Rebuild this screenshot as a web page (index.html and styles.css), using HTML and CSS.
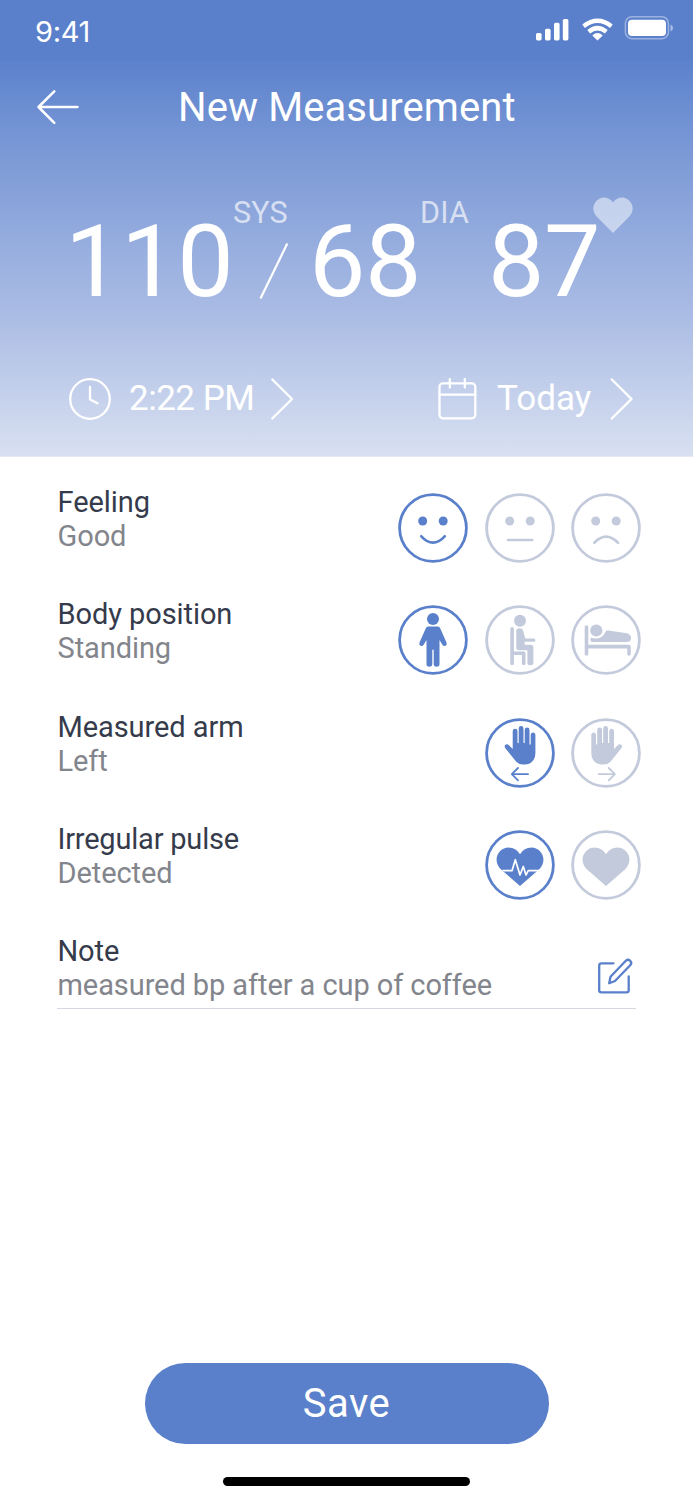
FILE: index.html
```
<!DOCTYPE html>
<html lang="en">
<head>
<meta charset="utf-8">
<title>New Measurement</title>
<link rel="stylesheet" href="styles.css">
</head>
<body>
<main class="screen">
  <div class="status">
    <span class="time">9:41</span>
    <svg class="status-icons" width="140" height="28" viewBox="0 0 140 28" fill="#fff">
      <rect x="2" y="19" width="5.6" height="7.4" rx="1.6"/>
      <rect x="11" y="14.8" width="5.6" height="11.6" rx="1.6"/>
      <rect x="20" y="8.8" width="5.6" height="17.6" rx="1.6"/>
      <rect x="28.8" y="5" width="5.6" height="21.4" rx="1.6"/>
      <g fill="none" stroke="#fff" stroke-width="4.4">
        <path d="M49.600 12.200Q63.500 1.500 77.400 12.200"/>
        <path d="M54.700 17.800Q63.500 10.400 72.300 17.800"/>
      </g>
      <path d="M58.300 21.400Q63.500 16.600 68.700 21.400L63.500 26.400Z"/>
      <rect x="91.400" y="2.700" width="43" height="22" rx="6.500" fill="none" stroke="#fff" stroke-opacity=".4" stroke-width="1.500"/>
      <rect x="94" y="5.700" width="38" height="16.400" rx="4"/>
      <path d="M136.500 10.500Q139 11.500 139 14T136.500 17.500Z" opacity=".5"/>
    </svg>
  </div>
  <header class="hero">
    <div class="titlebar">
      <svg class="back" width="46" height="38" viewBox="0 0 46 38" fill="none" stroke="#fff" stroke-width="2.500" stroke-linecap="round" stroke-linejoin="round"><path d="M42.500 19H3.500M19.300 3.300L3.500 19L19.300 34.800"/></svg>
      <h1 class="title">New Measurement</h1>
    </div>
    <div class="readings">
      <span class="num num-sys">110</span>
      <div class="sep"><span class="unit">SYS</span><svg class="slash" width="30" height="58" viewBox="0 0 30 58" stroke="#fff" stroke-width="2.200"><path d="M1.500 56.500L28.300 1.500"/></svg></div>
      <span class="num num-dia">68</span>
      <span class="unit unit-dia">DIA</span>
      <span class="num num-pulse">87</span>
      <svg class="pulse-heart" width="40" height="37" viewBox="0 0 40 37" fill="#fff" fill-opacity=".5"><path d="M20 36L3.400 19.300C-4 10.500 3.500.500 10.500.500Q16.500.500 20 5.300Q23.500.500 29.500.500C36.500.500 44 10.500 36.600 19.300Z"/></svg>
    </div>
    <div class="when">
      <div class="pick">
        <svg width="44" height="44" viewBox="0 0 44 44" fill="none" stroke="#fff" stroke-width="2.300" stroke-linecap="round" stroke-linejoin="round"><circle cx="22" cy="22" r="19.800"/><path d="M22 10V22.500L29.500 26.300"/></svg>
        <span class="pick-text time-text">2:22 PM</span>
        <svg width="24" height="44" viewBox="0 0 24 44" fill="none" stroke="#fff" stroke-width="2.400" stroke-linecap="round" stroke-linejoin="round"><path d="M2.300 2.500L22 22L2.300 41.500"/></svg>
      </div>
      <div class="pick">
        <svg width="40" height="44" viewBox="0 0 40 44" fill="none" stroke="#fff" stroke-width="2.300" stroke-linecap="round"><rect x="2.500" y="6.300" width="35.800" height="35" rx="3.500"/><path d="M2.500 17.600H38.300M12.800 2.200V10.500M27.800 2.200V10.500"/></svg>
        <span class="pick-text">Today</span>
        <svg width="24" height="44" viewBox="0 0 24 44" fill="none" stroke="#fff" stroke-width="2.400" stroke-linecap="round" stroke-linejoin="round"><path d="M1.800 2.500L21.500 22L1.800 41.500"/></svg>
      </div>
    </div>
  </header>
  <section class="form">
    <div class="row">
      <div class="labels"><div class="label">Feeling</div><div class="value">Good</div></div>
      <div class="options">
        <svg class="opt on" viewBox="0 0 70 70"><circle class="ring" cx="35" cy="35" r="33.400"/><circle cx="24.700" cy="28" r="4.500"/><circle cx="45.200" cy="28" r="4.500"/><path class="line" d="M23.300 43.300Q35 56 46.700 43.300"/></svg>
        <svg class="opt" viewBox="0 0 70 70"><circle class="ring" cx="35" cy="35" r="33.400"/><circle cx="24.700" cy="28" r="4.500"/><circle cx="45.200" cy="28" r="4.500"/><path class="line" d="M23 47H47.200"/></svg>
        <svg class="opt" viewBox="0 0 70 70"><circle class="ring" cx="35" cy="35" r="33.400"/><circle cx="24.700" cy="28" r="4.500"/><circle cx="45.200" cy="28" r="4.500"/><path class="line" d="M23.300 49.700Q35 37.500 47 49.700"/></svg>
      </div>
    </div>
    <div class="row">
      <div class="labels"><div class="label">Body position</div><div class="value">Standing</div></div>
      <div class="options">
        <svg class="opt on" viewBox="0 0 70 70"><circle class="ring" cx="35" cy="35" r="33.400"/><circle cx="35" cy="14" r="6"/><path d="M30 21.500H40Q41.500 21.500 42.300 23.500L48.500 37.500Q49.300 40 47.300 40.800Q45.300 41.300 44.200 39.400L41.500 35V59Q41.500 61.800 38.800 61.800Q35.700 61.800 35.700 59V44.700H34.300V59Q34.300 61.800 31.200 61.800Q28.500 61.800 28.500 59V35L25.800 39.400Q24.700 41.300 22.700 40.800Q20.700 40 21.500 37.500L27.700 23.500Q28.500 21.500 30 21.500Z"/></svg>
        <svg class="opt" viewBox="0 0 70 70"><circle class="ring" cx="35" cy="35" r="33.400"/><circle cx="35" cy="15.800" r="6"/><path d="M31.300 26.500Q31.300 23.300 34.500 23.300Q37.500 23.300 38.200 26L40.200 33.500H48.800Q50.400 33.500 50.400 35.200Q50.400 36.700 48.800 36.700H39.600V39.700H45.500Q48.400 39.700 48.400 42.600V58Q48.400 60.200 45.400 60.200Q42.400 60.200 42.400 58V45.300H34Q31.300 45.300 31.300 42.500Z"/><path class="line thick" d="M27.100 23.700V58.400M27.500 48.300H38.700V58.400"/></svg>
        <svg class="opt" viewBox="0 0 70 70"><circle class="ring" cx="35" cy="35" r="33.400"/><path class="line thick" d="M15.500 22V49M15.500 41.600H58V49"/><circle cx="25.300" cy="25.500" r="6.100"/><path d="M20.500 32.800Q25 34.500 29.500 32.500Q33 30.800 34.500 26.700Q35 25.200 37.500 25.500L56 28.300Q60 29.700 60 33Q60 37 55.500 37H21.300Q19.300 36.800 19.300 34.800Q19.300 33 20.500 32.800Z"/></svg>
      </div>
    </div>
    <div class="row">
      <div class="labels"><div class="label">Measured arm</div><div class="value">Left</div></div>
      <div class="options">
        <svg class="opt on" viewBox="0 0 70 70"><circle class="ring" cx="35" cy="35" r="33.400"/><path d="M27.700 31V13.200A2.400 2.400 0 0 1 32.500 13.200V25H33.700V10.400A2.400 2.400 0 0 1 38.500 10.400V25H39.700V12A2.400 2.400 0 0 1 44.500 12V26.500H45.700V16.500A2.400 2.400 0 0 1 50.400 16.500V35.500Q50 46.600 38 46.600Q32.500 46.600 29 41L20 29.700Q19 27.500 20.800 26.500Q22.500 25.700 24.200 27.500Z"/><path class="line thin" d="M43 56.200H27M33 50L26.800 56.200L33 62.400"/></svg>
        <svg class="opt" viewBox="0 0 70 70"><circle class="ring" cx="35" cy="35" r="33.400"/><g transform="translate(70.700 0) scale(-1 1)"><path d="M27.700 31V13.200A2.400 2.400 0 0 1 32.500 13.200V25H33.700V10.400A2.400 2.400 0 0 1 38.500 10.400V25H39.700V12A2.400 2.400 0 0 1 44.500 12V26.500H45.700V16.500A2.400 2.400 0 0 1 50.400 16.500V35.500Q50 46.600 38 46.600Q32.500 46.600 29 41L20 29.700Q19 27.500 20.800 26.500Q22.500 25.700 24.200 27.500Z"/><path class="line thin" d="M43 56.200H27M33 50L26.800 56.200L33 62.400"/></g></svg>
      </div>
    </div>
    <div class="row">
      <div class="labels"><div class="label label-tight">Irregular pulse</div><div class="value">Detected</div></div>
      <div class="options">
        <svg class="opt on" viewBox="0 0 70 70"><circle class="ring" cx="35" cy="35" r="33.400"/><path d="M35 56L15.500 39C6.500 29 14.500 17.600 23.500 17.600Q31 17.600 35 24.300Q39 17.600 46.500 17.600C55.500 17.600 63.500 29 54.500 39Z"/><path class="beat" d="M17.300 40.700H27L30.300 29.700L35 45L38.300 36.500L41 45L43.300 40.700H54.700"/></svg>
        <svg class="opt" viewBox="0 0 70 70"><circle class="ring" cx="35" cy="35" r="33.400"/><path d="M35 56L15.500 39C6.500 29 14.500 17.600 23.500 17.600Q31 17.600 35 24.300Q39 17.600 46.500 17.600C55.500 17.600 63.500 29 54.500 39Z"/></svg>
      </div>
    </div>
    <div class="note">
      <div class="labels"><div class="label">Note</div><div class="value">measured bp after a cup of coffee</div></div>
      <svg class="edit" width="40" height="40" viewBox="0 0 40 40" fill="none" stroke="#5a80cb" stroke-width="2.300" stroke-linecap="round" stroke-linejoin="round"><path d="M18.500 8.300H6.500Q4.200 8.300 4.200 10.500V35.200Q4.200 37.300 6.500 37.300H31.500Q33.700 37.300 33.700 35.200V21.500"/><path d="M14.200 28.300L15.500 21.700L30.800 5.800Q33 3.800 35.200 5.800Q37.400 8 35.200 10.300L20 26Z"/></svg>
    </div>
  </section>
  <footer class="footer">
    <button class="save">Save</button>
    <div class="home"></div>
  </footer>
</main>
</body>
</html>
```
FILE: styles.css
```
* { box-sizing: border-box; }
body { margin: 0; background: #fff; font-family: Roboto, sans-serif; }
.screen { width: 693px; height: 1500px; display: flex; flex-direction: column; overflow: hidden; }
.status { height: 61px; background: #5a80cb; display: flex; justify-content: space-between; padding: 14px 19px 0 35px; }
.time { font: 400 29px/35px Inter, sans-serif; color: #fff; letter-spacing: -0.3px; }
.status-icons { display: block; }
.hero { height: 396px; background: linear-gradient(#5c82cd 0%, #7b99d6 23%, #a9bbe4 63%, #d8e0f1 100%); color: #fff; border-bottom: 1px solid #e6eaf4; }
.titlebar { height: 92px; display: flex; align-items: center; padding-left: 35px; }
.back { display: block; }
.title { margin: 2px 0 0 97px; font-size: 40px; line-height: 48px; font-weight: 400; letter-spacing: 0.1px; white-space: nowrap; }
.readings { height: 161px; display: flex; align-items: flex-start; padding: 43px 0 0 65px; }
.num { font-size: 100.5px; line-height: 120px; letter-spacing: -0.4px; white-space: nowrap; margin-top: 6px; }
.num-sys { width: 168px; }
.num-dia { width: 111px; margin-left: 18px; }
.num-pulse { width: 106px; margin-left: 15px; }
.unit { font-size: 30.5px; line-height: 34px; color: rgba(255, 255, 255, 0.66); white-space: nowrap; letter-spacing: 0.2px; }
.sep { width: 58px; display: flex; flex-direction: column; }
.slash { margin: 12px 0 0 26px; }
.unit-dia { width: 53px; }
.pulse-heart { flex: none; margin: 0.5px 0 0 -1px; }
.when { display: flex; justify-content: space-between; padding: 63px 59px 0 68px; }
.pick { display: flex; align-items: center; }
.pick-text { font-size: 35px; line-height: 44px; white-space: nowrap; width: 95px; margin: 0 18px 0 20px; }
.time-text { width: 125px; margin: 0 16px 0 17px; letter-spacing: -0.5px; }
.form { padding: 27px 52px 0 57px; }
.row { height: 112.3px; display: flex; justify-content: space-between; }
.labels { padding: 1px 0 0 0.5px; }
.label, .value { font-size: 29px; line-height: 34px; letter-spacing: -0.08px; white-space: nowrap; }
.label { color: #353b4b; }
.label-tight { letter-spacing: -0.2px; }
.value { color: #83858c; }
.options { display: flex; gap: 16.4px; padding-top: 9px; }
.opt { width: 70px; height: 70px; display: block; color: #c3cadb; fill: currentColor; }
.on { color: #5a80cb; }
.ring { fill: none; stroke: currentColor; stroke-width: 2.8; }
.line { fill: none; stroke: currentColor; stroke-width: 2.7; stroke-linecap: round; }
.thick { stroke-width: 3.6; stroke-linejoin: round; }
.thin { stroke-width: 1.8; stroke-linejoin: round; }
.beat { fill: none; stroke: #fff; stroke-width: 1.7; stroke-linejoin: round; }
.note { width: 579px; height: 76px; border-bottom: 1px solid #d5d8e0; display: flex; justify-content: space-between; }
.edit { margin: 22px 1px 0 0; display: block; }
.footer { margin-top: auto; height: 137px; display: flex; flex-direction: column; align-items: center; }
.save { width: 404px; height: 81px; border: 0; border-radius: 41px; background: #5a80cb; color: #fff; font: 400 40px/48px Roboto, sans-serif; letter-spacing: 0.5px; padding: 0; }
.home { width: 247px; height: 9px; margin-top: 33px; border-radius: 5px; background: #000; }
```
